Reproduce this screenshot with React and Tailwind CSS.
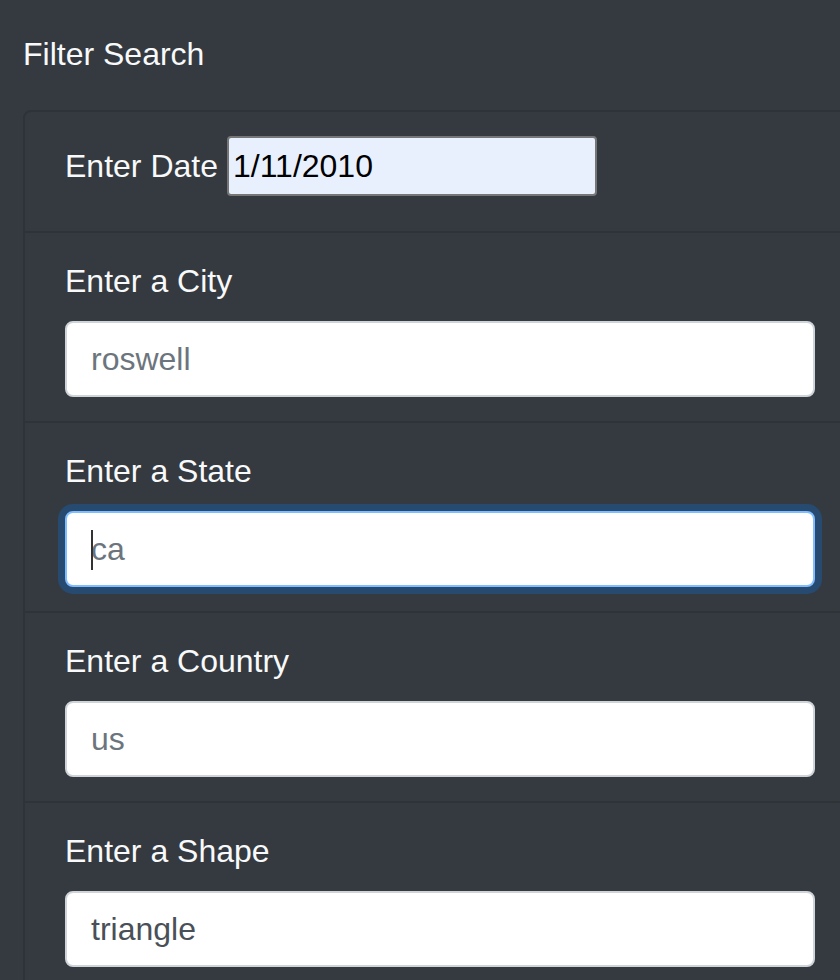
import React from 'react';

const font = { fontFamily: '"Liberation Sans", Arial, sans-serif' };

const Field = ({ label, value, placeholder, focused, caret }) => (
  <div className="border-t-2 border-[#2e3337] px-[40px] py-[24px]">
    <label className="block text-[32px] leading-[48px] text-[#f8f9fa] mb-[16px]">{label}</label>
    <div
      className={`relative flex items-center h-[76px] w-full rounded-[8px] bg-white px-[24px] text-[32px] border-2 ${
        focused
          ? 'border-[#80bdff] shadow-[0_0_0_7px_rgba(0,123,255,0.25)]'
          : 'border-[#ced4da]'
      }`}
    >
      {caret && <span className="absolute left-[24px] top-[17px] h-[40px] w-[2px] bg-[#333]" />}
      {value ? (
        <span className="text-[#495057]">{value}</span>
      ) : (
        <span className="text-[#6c757d]">{placeholder}</span>
      )}
    </div>
  </div>
);

export default function App() {
  return (
    <div className="w-[840px] h-[980px] overflow-hidden bg-[#343a40]" style={font}>
      <div className="pl-[23px] pt-[30px]">
        <h5 className="text-[32px] leading-[48px] text-[#f8f9fa] mb-[32px]">Filter Search</h5>
        <div className="w-[834px] rounded-t-[8px] border-2 border-[#2e3337]">
          <div className="h-[119px] px-[40px] pt-[24px]">
            <div className="flex items-center h-[60px]">
              <span className="text-[32px] text-[#f8f9fa] mr-[9px]">Enter Date</span>
              <div className="flex items-center h-[60px] w-[370px] rounded-[4px] border-2 border-[#767676] bg-[#e8f0fe] px-[4px] text-[32px] text-black">
                1/11/2010
              </div>
            </div>
          </div>
          <Field label="Enter a City" placeholder="roswell" />
          <Field label="Enter a State" placeholder="ca" focused caret />
          <Field label="Enter a Country" placeholder="us" />
          <Field label="Enter a Shape" value="triangle" />
        </div>
      </div>
    </div>
  );
}
